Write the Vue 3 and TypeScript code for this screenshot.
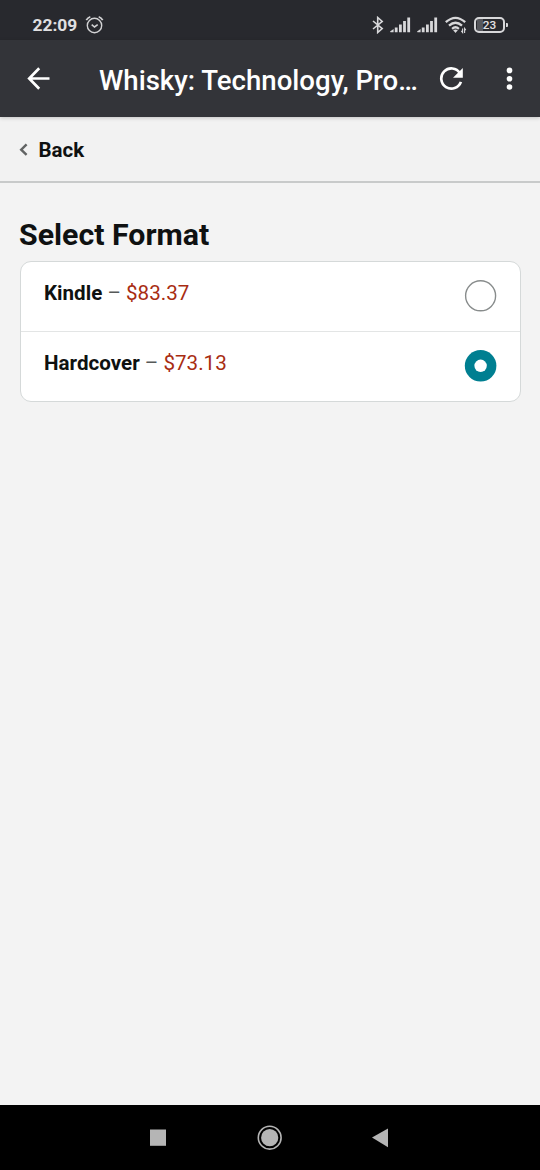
<script setup lang="ts">
import { ref } from 'vue'

interface Format {
  id: string
  name: string
  price: string
}

const formats: Format[] = [
  { id: 'kindle', name: 'Kindle', price: '$83.37' },
  { id: 'hardcover', name: 'Hardcover', price: '$73.13' },
]
const selected = ref<string>('hardcover')
</script>

<template>
  <div class="screen">
    <header class="status">
      <span class="clock">22:09</span>
      <svg class="alarm" width="20" height="20" viewBox="0 0 20 20" fill="none" stroke="#d2d2d4" stroke-width="1.4">
        <circle cx="10.5" cy="10.5" r="7.2" />
        <path d="M2.3 5.2Q3.7 2.6 6.3 1.7M14.7 1.7Q17.3 2.6 18.7 5.2" stroke-width="1.7" />
        <path d="M7.7 9.6 10.5 12l3.2-2.4" stroke-width="1.6" />
      </svg>
      <div class="indicators">
        <svg class="bluetooth" width="12" height="18" viewBox="0 0 12 18" fill="none" stroke="#d8d8da" stroke-width="1.6">
          <path d="M1 5 10.2 12.6 5.7 16.5V1.5L10.2 5.4 1 13" />
        </svg>
        <svg v-for="n in 2" :key="n" class="signal" width="21" height="16" viewBox="0 0 21 16" fill="#d8d8da">
          <path d="M0 14.6 3.6 12v3.2H.5zM4.8 10.4h2.8v4.8H4.8zM9 7.4h2.8v7.8H9zM13.1 4h2.8v11.2h-2.8zM17.3.4h2.8v14.8h-2.8z" />
        </svg>
        <svg class="wifi" width="23" height="18" viewBox="0 0 23 18" fill="none" stroke="#d8d8da" stroke-width="2.3">
          <path d="M.8 6.2Q10.5 -2.5 20.2 6.2M4 9.6Q10.5 3.9 17 9.6M7.1 12.8Q10.5 9.8 13.9 12.8" />
          <path d="M8.2 14.3Q10.5 12.6 12.8 14.3L10.5 17z" fill="#d8d8da" stroke="none" />
          <path d="M17.6 12.5v4l-1.3-1.6M19.6 17v-4.5l1.2 1.6" stroke-width="1.1" />
        </svg>
        <div class="battery"><span>23</span></div>
      </div>
    </header>

    <div class="toolbar">
      <svg class="arrow" width="24" height="24" viewBox="0 0 24 24" fill="none" stroke="#fff" stroke-width="2.7">
        <path d="M13.2 1.3 3.2 11.5l10 10.2M3.5 11.5h20" />
      </svg>
      <h1 class="title">Whisky: Technology, Pro…</h1>
      <svg class="reload" width="24" height="24" viewBox="0 0 24 24">
        <path d="M20.9 6.1A10.1 10.1 0 1 0 21.9 14.9" fill="none" stroke="#fff" stroke-width="2.7" />
        <path d="M23.8 1v9.7H14z" fill="#fff" />
      </svg>
      <svg class="more" width="7" height="24" viewBox="0 0 7 24" fill="#fff">
        <circle cx="3.5" cy="3.4" r="2.8" /><circle cx="3.5" cy="11.7" r="2.8" /><circle cx="3.5" cy="20" r="2.8" />
      </svg>
    </div>

    <nav class="back">
      <svg width="9" height="13" viewBox="0 0 9 13" fill="none" stroke="#626464" stroke-width="2.4">
        <path d="M7.6 1.3 2.2 6.7l5.4 5.1" />
      </svg>
      <span>Back</span>
    </nav>

    <main class="content">
      <h2>Select Format</h2>
      <div class="card">
        <label v-for="f in formats" :key="f.id" class="row" @click="selected = f.id">
          <span class="label"><b>{{ f.name }}</b> <i>–</i> <span class="price">{{ f.price }}</span></span>
          <svg class="radio" width="32" height="32" viewBox="0 0 32 32">
            <template v-if="selected === f.id">
              <circle cx="15.6" cy="15.8" r="15.8" fill="#007f91" />
              <circle cx="15.6" cy="15.8" r="6.2" fill="#fff" />
            </template>
            <circle v-else cx="15.6" cy="15.8" r="15" fill="#fff" stroke="#888c8c" stroke-width="1.4" />
          </svg>
        </label>
      </div>
    </main>

    <footer class="navbar">
      <svg width="540" height="65" viewBox="0 0 540 65" fill="#b5b5b5">
        <path d="M150 24.5h16v16.3h-16z" />
        <circle cx="269.7" cy="32.7" r="8.6" />
        <circle cx="269.7" cy="32.7" r="11.4" fill="none" stroke="#b5b5b5" stroke-width="1.6" />
        <path d="M372 32.6 388 23.4v18.8z" />
      </svg>
    </footer>
  </div>
</template>

<style>
body {
  margin: 0;
}
</style>

<style scoped>
.screen {
  width: 540px;
  height: 1170px;
  display: flex;
  flex-direction: column;
  overflow: hidden;
  background: #f3f3f3;
  color: #0f1111;
  font-family: Roboto, "Liberation Sans", sans-serif;
}
svg {
  display: block;
  flex: none;
}
.status {
  height: 40px;
  flex: none;
  box-sizing: border-box;
  padding: 0 32px 0 32.5px;
  display: flex;
  align-items: center;
  background: #28292e;
  color: #e0e0e2;
}
.clock {
  width: 45px;
  font-size: 17.4px;
  font-weight: 700;
  line-height: 20px;
  margin-top: 10px;
}
.alarm {
  margin: 9px 0 0 6.5px;
}
.indicators {
  margin-left: auto;
  display: flex;
  align-items: center;
  padding-top: 9px;
}
.bluetooth {
  margin-right: 6px;
}
.signal {
  margin-right: 6px;
}
.wifi {
  margin-left: 1px;
  margin-right: 6px;
}
.battery {
  position: relative;
  width: 31px;
  height: 16px;
  box-sizing: border-box;
  border: 2px solid #d8d8da;
  border-radius: 5px;
  background: linear-gradient(90deg, transparent 1px, #56575c 1px, #56575c 7px, transparent 7px);
  display: flex;
  align-items: center;
  justify-content: center;
  font-size: 11.8px;
  font-weight: 500;
  margin-right: 3px;
}
.battery::after {
  content: "";
  position: absolute;
  right: -5px;
  top: 4px;
  width: 2px;
  height: 4px;
  border-radius: 0 1px 1px 0;
  background: #d8d8da;
}
.toolbar {
  height: 77px;
  flex: none;
  display: flex;
  align-items: center;
  background: #333439;
  position: relative;
  box-shadow: 0 1px 4px rgba(0, 0, 0, 0.2);
}
.arrow {
  margin-left: 26px;
}
.title {
  margin: 4px 0 0 49px;
  width: 340px;
  color: #fff;
  font-size: 27.6px;
  font-weight: 500;
  line-height: 36px;
  white-space: nowrap;
}
.more {
  margin-left: 43px;
}
.back {
  height: 64px;
  flex: none;
  display: flex;
  align-items: center;
  padding-left: 19px;
  border-bottom: 2px solid #c8caca;
  background: #f2f2f2;
  font-size: 20.5px;
  font-weight: 700;
}
.back span {
  margin: 1px 0 0 10.5px;
}
.content {
  flex: 1;
  padding: 33px 19px 0 19.5px;
}
h2 {
  margin: 0 0 8px -0.5px;
  font-size: 30.3px;
  font-weight: 700;
  line-height: 37px;
}
.card {
  border: 1px solid #d5d9d9;
  border-radius: 11px;
  background: #fff;
  overflow: hidden;
}
.row {
  height: 70px;
  box-sizing: border-box;
  padding: 0 23.5px;
  display: flex;
  justify-content: space-between;
}
.row:first-child {
  height: 69px;
}
.row + .row {
  border-top: 1px solid #e3e5e5;
}
.label {
  font-size: 20.6px;
  line-height: 24px;
  margin-top: 19px;
}
.label i {
  font-style: normal;
  color: #565959;
}
.price {
  color: #a82c12;
}
.radio {
  margin-top: 18px;
  overflow: visible;
}
.navbar {
  height: 65px;
  flex: none;
  background: #000;
}
</style>
